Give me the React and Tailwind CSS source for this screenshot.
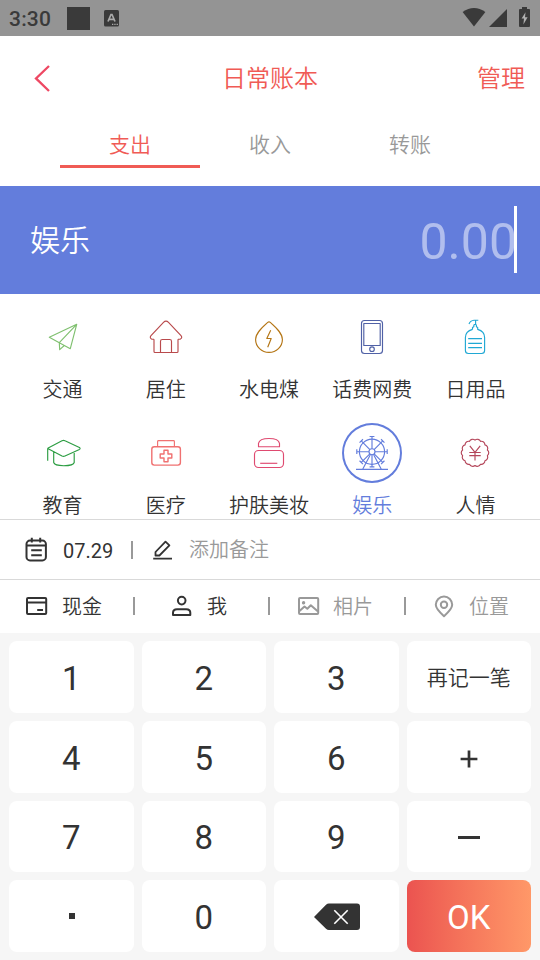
import clsx from "clsx";

const TABS = ["支出", "收入", "转账"];

// Scalloped ring around the yuan sign
const SCALLOPS = 14;
const scallopPath = (() => {
  const point = (i) => {
    const angle = ((i + 0.5) / SCALLOPS) * Math.PI * 2;
    return `${(30 + 12.7 * Math.cos(angle)).toFixed(2)} ${(29.8 + 12.7 * Math.sin(angle)).toFixed(2)}`;
  };
  let d = `M${point(0)}`;
  for (let i = 1; i <= SCALLOPS; i++) {
    d += `A3.6 3.6 0 0 1 ${point(i)}`;
  }
  return d + "Z";
})();

const CATEGORIES = [
  {
    name: "交通",
    color: "text-[#7fc06f]",
    icon: (
      <path d="M16.3 30.3 43.7 17.3 37.3 41.7 26.3 35.7ZM43.7 17.3 26.3 35.7 26.7 42.7 31.3 38.5" />
    ),
  },
  {
    name: "居住",
    color: "text-[#b94a4c]",
    icon: (
      <path d="M18 32.2V44.5Q18 45.5 19 45.5H41Q42 45.5 42 44.5V32.2M18 32.2H15.9Q13.2 30.7 15 28.6L27.5 15.3Q30 12.8 32.5 15.3L45 28.6Q46.8 30.7 44.1 32.2H42M24.5 45.5V34.3Q24.5 32.5 26.3 32.5H33.7Q35.5 32.5 35.5 34.3V45.5" />
    ),
  },
  {
    name: "水电煤",
    color: "text-[#b47514]",
    icon: (
      <path d="M28.7 15.4Q30 14.3 31.3 15.4C36.5 20 43.4 26 43.4 32.4A13.4 13 0 0 1 16.6 32.4C16.6 26 23.5 20 28.7 15.4ZM31.7 23.3 27.8 31.5H32.2L28.7 40.3" />
    ),
  },
  {
    name: "话费网费",
    color: "text-[#5061a6]",
    icon: (
      <>
        <rect x="19.5" y="13.5" width="21" height="33" rx="3" />
        <rect x="21.8" y="16.5" width="16.4" height="22" />
        <circle cx="30" cy="42.2" r="2.3" />
      </>
    ),
  },
  {
    name: "日用品",
    color: "text-[#20a8d4]",
    icon: (
      <path d="M27.5 22.4V20.6L28.8 19.8V18.6Q28.8 17.4 30.1 17.4T31.4 18.6V19.8L32.7 20.6V22.4C37 23.6 39.6 26.4 39.6 30.5V43.5Q39.6 46.5 36.6 46.5H23.4Q20.4 46.5 20.4 43.5V30.5C20.4 26.4 23.2 23.6 27.5 22.4M30.6 17V13.6M33.3 13.2H29Q25.2 13.6 24 17M23.2 31.6H37M23.2 36.3H37M23.2 40.6H37" />
    ),
  },
  {
    name: "教育",
    color: "text-[#2c9d42]",
    icon: (
      <path d="M15.2 24.9 29 17.8Q30.5 17 32 17.8L46.4 24.4Q47.8 25.4 46.4 26.4L32 33Q30.5 33.7 29 33L15.2 25.8Q14.5 25.4 15.2 24.9ZM14.7 25.4V37.7M20.7 28.8V39.5Q21.5 42.6 30.7 42.7Q40.5 42.6 41.2 39.5V28.8" />
    ),
  },
  {
    name: "医疗",
    color: "text-[#f07171]",
    icon: (
      <>
        <rect x="15.8" y="23.7" width="28.6" height="18.4" rx="2.5" strokeWidth="1.4" />
        <path d="M21.6 23.5V18.5Q21.6 17.6 22.6 17.6H37.4Q38.4 17.6 38.4 18.5V23.5" />
        <path
          strokeWidth="1.4"
          d="M28 27.3H32V31H35.8V35H32V38.8H28V35H24.2V31H28Z"
        />
      </>
    ),
  },
  {
    name: "护肤美妆",
    color: "text-[#df4a70]",
    icon: (
      <>
        <path d="M19.5 23.7V20.3C20.2 16.8 25 15.5 30 15.5S39.8 16.8 40.5 20.3V23.7Z" />
        <rect x="15.5" y="27.5" width="29" height="17" rx="4" />
        <path d="M21.2 40.3H38.3" />
      </>
    ),
  },
  {
    name: "娱乐",
    color: "text-[#637ddc]",
    active: true,
    icon: (
      <>
        <circle cx="30" cy="28.7" r="12.6" />
        <circle cx="30" cy="28.7" r="3" />
        {[0, 45, 90, 135, 180, 225, 270, 315].map((deg) => (
          <path
            key={deg}
            d="M30 25.7V13.5M27.6 13.5H32.4"
            transform={`rotate(${deg} 30 28.7)`}
          />
        ))}
        <path d="M28.2 32 20.8 46M31.8 32 39.2 46M14 46.4H46" />
      </>
    ),
  },
  {
    name: "人情",
    color: "text-[#b4465a]",
    icon: (
      <>
        <path d={scallopPath} />
        <path d="M24.8 22.8 30 29.4 35.2 22.8M24.3 29.5H35.7M24.3 32.6H35.7M30 29.4V37.4" />
      </>
    ),
  },
];

const StatusBar = () => (
  <div className="h-9 shrink-0 bg-[#949494] text-[#3a3a3a] flex items-center pl-[9px] pr-[10px]">
    <span className="w-[42px] text-[21px] leading-9 tracking-[0.2px] font-medium pt-px whitespace-nowrap">3:30</span>
    <span className="ml-4 h-[23px] w-[23px] bg-[#3a3a3a] mt-px" />
    <svg className="ml-[14px]" width="15" height="17" viewBox="0 0 15 17">
      <rect width="15" height="16.5" rx="1.5" fill="currentColor" />
      <path d="M4 11.5 7 4.5H8L11 11.5M5.2 9.3H9.8" fill="none" stroke="#aaa" strokeWidth="1.7" />
      <path d="M8 14.4H14" stroke="#aaa" strokeWidth="1.2" strokeDasharray="1.3 1" />
    </svg>
    <svg className="ml-auto" width="70" height="22" viewBox="460 7 70 22" fill="currentColor">
      <path d="M462.6 12Q474 4 485.4 12L474 26.5Z" />
      <path d="M507 9V27H489Z" />
      <path d="M522 7H527V9H529.2Q530 9 530 10V26Q530 27 529 27H520Q519 27 519 26V10Q519 9 520 9H522Z" />
      <path d="M525.5 12.2 521.6 18.5H524L523.4 24.5 527.6 17.2H525Z" fill="#b0b0b0" />
    </svg>
  </div>
);

const CategoryItem = ({ name, color, icon, active }) => (
  <div className="flex flex-col items-center h-[116px]">
    <div
      className={clsx(
        "h-[60px] w-[60px] rounded-full",
        color,
        active && "ring-2 ring-inset ring-[#637ddc]"
      )}
    >
      <svg
        width="60"
        height="60"
        viewBox="0 0 60 60"
        fill="none"
        stroke="currentColor"
        strokeWidth="1.15"
        strokeLinejoin="round"
      >
        {icon}
      </svg>
    </div>
    <span
      className={clsx(
        "mt-2 text-[20px] leading-[30px] whitespace-nowrap",
        active ? "text-[#637ddc]" : "text-[#333]"
      )}
    >
      {name}
    </span>
  </div>
);

const Divider = ({ className }) => (
  <span className={clsx("h-[18px] w-[2px] shrink-0 bg-[#999]", className)} />
);

const LineIcon = ({ width = 24, children }) => (
  <svg
    className="shrink-0"
    width={width}
    height="26"
    viewBox={`0 0 ${width} 26`}
    fill="none"
    stroke="currentColor"
    strokeWidth="2"
    strokeLinejoin="round"
  >
    {children}
  </svg>
);

const Key = ({ children, className }) => (
  <button
    className={clsx(
      "flex items-center justify-center rounded-lg leading-none",
      className || "bg-white font-normal text-[33px] text-[#333] pt-[3px]"
    )}
  >
    {children}
  </button>
);

const App = () => {
  return (
    <div className="w-[540px] h-[960px] flex flex-col overflow-hidden bg-white font-[350] font-[Roboto,'Noto_Sans_CJK_SC',sans-serif]">
      <StatusBar />

      <header className="h-[84px] shrink-0 grid grid-cols-3 items-center px-[15px] text-2xl text-[#f05b55]">
        <svg
          className="ml-[17px]"
          width="20"
          height="30"
          viewBox="0 0 20 30"
          fill="none"
          stroke="#ee4863"
          strokeWidth="2.3"
        >
          <path d="M17 3 4 15.4 17 28" />
        </svg>
        <h1 className="text-center pt-0.5">日常账本</h1>
        <span className="text-right pt-0.5">管理</span>
      </header>

      <nav className="h-[66px] shrink-0 flex px-[60px] text-[21px]">
        {TABS.map((tab, idx) => (
          <div
            key={tab}
            className={clsx(
              "w-[140px] h-12 text-center leading-[50px] border-b-3",
              idx === 0 ? "text-[#f05b55] border-[#f05b55]" : "text-[#999] border-transparent"
            )}
          >
            {tab}
          </div>
        ))}
      </nav>

      <section className="h-[108px] shrink-0 flex items-center justify-between bg-[#637ddc] pl-[30px] pr-[23px] pb-0.5 text-white">
        <span className="text-[30px] pt-0.5">娱乐</span>
        <div className="flex items-center">
          <span className="font-normal text-[50px] leading-none text-white/50 -mr-[3px] pt-1.5">0.00</span>
          <span className="h-[67px] w-[3px] bg-white" />
        </div>
      </section>

      <section className="h-[225px] shrink-0 overflow-hidden pt-[13px] pl-[11px] pr-[13px]">
        <div className="grid grid-cols-5">
          {CATEGORIES.map((item) => (
            <CategoryItem key={item.name} {...item} />
          ))}
        </div>
      </section>

      <div className="h-[60px] shrink-0 flex items-center border-t border-[#d9d9d9] pl-6 text-[20px] text-[#333]">
        <LineIcon>
          <rect x="2.5" y="3.6" width="19.4" height="19.8" rx="3.5" />
          <path d="M3 8.4H22M7.8 .8V5.4M16.2 .8V5.4M7.2 13.3H17.8M7.2 18.3H17.8" />
        </LineIcon>
        <span className="ml-[15px] w-[49px] pt-[3px] font-normal">07.29</span>
        <Divider className="ml-[19px]" />
        <span className="ml-[19px] flex">
          <LineIcon>
            <path d="M3.5 15 13.5 4.6 17.4 8.3 7.4 18.5H3.5ZM1.2 21.6H20" strokeWidth="1.8" />
          </LineIcon>
        </span>
        <span className="ml-[13px] text-[#999]">添加备注</span>
      </div>

      <div className="h-[54px] shrink-0 flex items-center border-t border-[#d9d9d9] pb-px pl-6 text-[20px] text-[#333]">
        <LineIcon>
          <rect x="3" y="5" width="19.2" height="16" rx="1" />
          <path d="M3 9.4H22M13.2 17H19" />
        </LineIcon>
        <span className="ml-[14px] w-10 pt-0.5">现金</span>
        <Divider className="ml-[31px]" />
        <span className="ml-[35px] flex">
          <LineIcon>
            <circle cx="11.7" cy="7.6" r="3.8" />
            <path d="M3 22V19.8Q3 16.2 7 16.2H16.3Q20.3 16.2 20.3 19.8V22Z" />
          </LineIcon>
        </span>
        <span className="ml-[13px] w-5 pt-0.5">我</span>
        <Divider className="ml-[41px]" />
        <span className="ml-[26px] flex items-center text-[#999]">
          <LineIcon>
            <rect x="3" y="5" width="19.2" height="16" rx="1" />
            <circle cx="7.6" cy="9.8" r="1.1" fill="currentColor" strokeWidth="1.2" />
            <path d="M3.5 18 8.5 13.5 11.3 15.8 14.8 12.3 22 18.6" />
          </LineIcon>
          <span className="ml-[13px] w-10 pt-0.5">相片</span>
        </span>
        <Divider className="ml-[31px]" />
        <span className="ml-[26px] flex items-center text-[#999]">
          <LineIcon>
            <path d="M12 23.2C7.5 19.2 3.8 15.8 3.8 11.8A8.2 8.3 0 0 1 20.2 11.8C20.2 15.8 16.5 19.2 12 23.2Z" />
            <circle cx="12" cy="11.7" r="3.2" />
          </LineIcon>
          <span className="ml-[13px] pt-0.5">位置</span>
        </span>
      </div>

      <div className="flex-1 grid grid-cols-4 grid-rows-4 gap-2 bg-[#f6f6f6] px-[9px] py-2">
        <Key>1</Key>
        <Key>2</Key>
        <Key>3</Key>
        <Key className="bg-white text-[21px] text-[#333] pt-1">再记一笔</Key>
        <Key>4</Key>
        <Key>5</Key>
        <Key>6</Key>
        <Key className="bg-white text-[#333] pt-1">
          <svg width="18" height="18" viewBox="0 0 18 18" stroke="currentColor" strokeWidth="2.7">
            <path d="M9 .4V17.6M.6 9H17.4" />
          </svg>
        </Key>
        <Key>7</Key>
        <Key>8</Key>
        <Key>9</Key>
        <Key className="bg-white pt-0.5">
          <span className="h-[2.5px] w-[22px] bg-[#333]" />
        </Key>
        <Key className="bg-white">
          <span className="ml-px h-[6px] w-[6px] bg-[#333]" />
        </Key>
        <Key>0</Key>
        <Key className="bg-white pl-px">
          <svg width="46" height="27" viewBox="0 0 46 27">
            <path d="M0 14 12 1.8Q13.3.4 15 .4H43Q46 .4 46 3.4V24Q46 27 43 27H15Q13.3 27 12 25.8Z" fill="#333" />
            <path d="M20.3 7.3 33.7 20.7M33.7 7.3 20.3 20.7" stroke="#fff" strokeWidth="1.6" />
          </svg>
        </Key>
        <Key className="bg-linear-to-r from-[#eb5350] to-[#ff9868] font-normal text-[33px] text-white pt-[3px]">
          OK
        </Key>
      </div>
    </div>
  );
};

export default App;
